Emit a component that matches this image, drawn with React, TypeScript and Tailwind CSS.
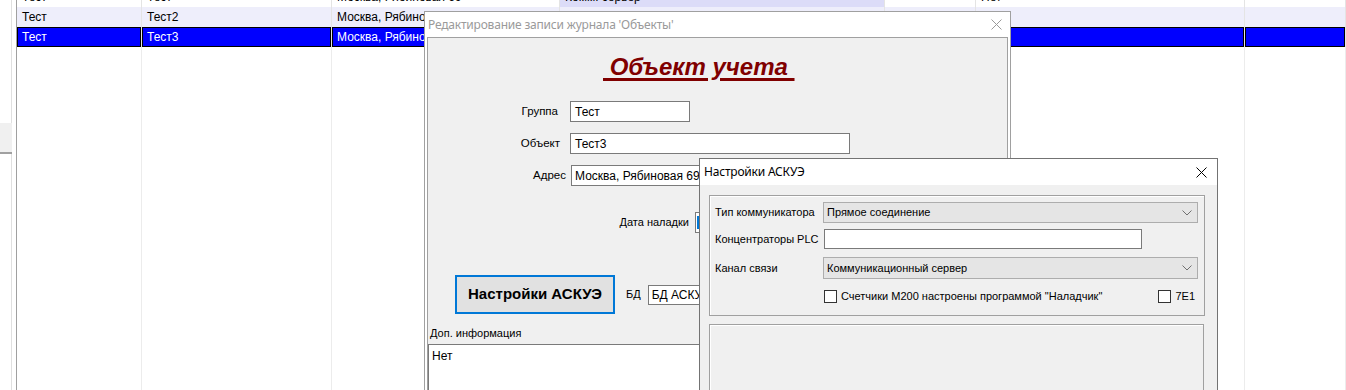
import React from "react";

const cellW = ["w-[125px]", "w-[190px]", "w-[228px]", "w-[325px]", "w-[91px]", "w-[269px]", "w-[101px]"];

function Chevron() {
  return (
    <svg width="10" height="6" viewBox="0 0 10 6">
      <polyline points="0.5,0.5 5,5 9.5,0.5" fill="none" stroke="#707070" strokeWidth="1" />
    </svg>
  );
}

function CloseX({ color }: { color: string }) {
  return (
    <svg width="11" height="11" viewBox="0 0 11 11">
      <path d="M0.5,0.5 L10.5,10.5 M10.5,0.5 L0.5,10.5" stroke={color} strokeWidth="1" />
    </svg>
  );
}

function Row({ cells, kind, extra }: { cells: string[]; kind: "plain" | "alt" | "sel"; extra?: string }) {
  return (
    <div className={`flex h-[20px] ${extra ?? ""}`}>
      {cellW.map((w, i) => {
        const txt = cells[i] ?? "";
        if (kind === "sel") {
          return (
            <div key={i} className={`${w} shrink-0 h-full border-r border-[#e4e4e4]`}>
              <div className="h-full border border-black bg-[#0000ff] text-white pl-[4px] flex items-center whitespace-nowrap overflow-hidden">
                {txt}
              </div>
            </div>
          );
        }
        const bg =
          kind === "alt" ? "bg-[#eeeefb]" : i === 3 ? "bg-[#dcdcf8]" : "bg-white";
        return (
          <div
            key={i}
            className={`${w} shrink-0 h-full ${bg} border-r border-[#e4e4e4] pl-[5px] flex items-center whitespace-nowrap overflow-hidden text-black`}
          >
            {txt}
          </div>
        );
      })}
    </div>
  );
}

export default function App() {
  return (
    <div className="relative w-[1346px] h-[390px] overflow-hidden bg-white font-['Liberation_Sans',Arial,sans-serif] text-[12px] text-black">
      {/* background: left strip + grid */}
      <div className="flex h-full">
        <div className="w-[16px] shrink-0 h-full flex flex-col">
          <div className="h-[123px] w-[12px] border-r border-[#e0e0e0] bg-white" />
          <div className="h-[31px] w-[12px] bg-[#f0f0f0] border-b-2 border-[#a0a0a0]" />
          <div className="flex-1 w-[12px] border-r border-[#e0e0e0] bg-white" />
        </div>
        <div className="w-[1px] shrink-0 bg-[#a0a0a0] h-full" />
        <div className="flex-1 h-full flex flex-col overflow-hidden">
          <Row cells={["Тест", "Тест", "Москва, Рябиновая 69", "Комм. сервер", "", "Нет", ""]} kind="plain" extra="-mt-[13px]" />
          <Row cells={["Тест", "Тест2", "Москва, Рябиновая 69", "Комм. сервер", "", "Нет", ""]} kind="alt" />
          <Row cells={["Тест", "Тест3", "Москва, Рябиновая 69", "Комм. сервер", "", "Нет", ""]} kind="sel" />
          <div className="flex flex-1">
            {cellW.map((w, i) => (
              <div key={i} className={`${w} shrink-0 h-full border-r border-[#ececec]`} />
            ))}
          </div>
        </div>
      </div>

      {/* Dialog 1 */}
      <div className="absolute left-[424px] top-[11px] w-[587px] h-[400px] border border-[#a0a0a0] bg-white flex flex-col">
        <div className="h-[25px] shrink-0 flex items-center justify-between pl-[3px] pr-[8px] font-['Noto_Sans','Open_Sans',sans-serif] text-[12px] text-[#9a9a9a]">
          <span className="tracking-[-0.2px]">Редактирование записи журнала 'Объекты'</span>
          <CloseX color="#9a9a9a" />
        </div>
        <div className="flex-1 mx-[2px] border border-[#a0a0a0] bg-[#f0f0f0] flex flex-col">
          <div className="mt-[15px] ml-[175px] h-[28px] flex items-center">
            <span className="whitespace-pre font-bold italic text-[24px] leading-[28px] text-[#800000] underline decoration-[3px] underline-offset-[3px]">
              {" Объект учета "}
            </span>
          </div>
          <div className="mt-[20px] flex items-center h-[21px]">
            <span className="w-[130px] text-right text-[11.5px]">Группа</span>
            <div className="ml-[12px] w-[120px] h-[21px] bg-white border border-[#7a7a7a] pl-[4px] flex items-center">Тест</div>
          </div>
          <div className="mt-[11px] flex items-center h-[21px]">
            <span className="w-[132px] text-right text-[11.5px]">Объект</span>
            <div className="ml-[10px] w-[280px] h-[21px] bg-white border border-[#7a7a7a] pl-[4px] flex items-center">Тест3</div>
          </div>
          <div className="mt-[11px] flex items-center h-[21px]">
            <span className="w-[138px] text-right text-[11.5px]">Адрес</span>
            <div className="ml-[5px] w-[280px] h-[21px] bg-white border border-[#7a7a7a] pl-[3px] flex items-center">Москва, Рябиновая 69</div>
          </div>
          <div className="mt-[26px] flex items-center h-[21px]">
            <span className="w-[261px] text-right text-[11px]">Дата наладки</span>
            <div className="ml-[6px] w-[120px] h-[21px] bg-white border border-[#7a7a7a] flex items-center">
              <div className="ml-[1px] w-[3px] h-[13px] bg-[#0078d7]" />
            </div>
          </div>
          <div className="mt-[42px] flex items-center h-[39px]">
            <button className="ml-[27px] w-[160px] h-[39px] bg-[#e1e1e1] border-2 border-[#0078d7] font-bold text-[15px] text-black">
              Настройки АСКУЭ
            </button>
            <span className="ml-[11px] text-[11px]">БД</span>
            <div className="ml-[7px] w-[200px] h-[20px] bg-white border border-[#7a7a7a] pl-[3px] flex items-center">БД АСКУЭ</div>
          </div>
          <div className="mt-[12px] ml-[2px] leading-[14px] text-[11px]">Доп. информация</div>
          <div className="mt-[4px] w-[580px] h-[60px] bg-white border border-[#7a7a7a] pl-[3px] pt-[2px]">Нет</div>
        </div>
      </div>

      {/* Dialog 2 */}
      <div className="absolute left-[699px] top-[158px] w-[519px] h-[250px] border border-[#737373] bg-white flex flex-col">
        <div className="h-[26px] shrink-0 flex items-center justify-between pl-[4px] pr-[10px] font-['Noto_Sans','Open_Sans',sans-serif] text-[12px] text-black">
          <span className="tracking-[-0.2px]">Настройки АСКУЭ</span>
          <CloseX color="#000000" />
        </div>
        <div className="flex-1 bg-[#f0f0f0] flex flex-col pl-[9px]">
          <div className="mt-[10px] w-[496px] h-[121px] border border-[#a0a0a0] shadow-[inset_1px_1px_0_#ffffff] flex flex-col pl-[5px] text-[11px]">
            <div className="mt-[6px] flex items-center h-[21px]">
              <span className="w-[108px]">Тип коммуникатора</span>
              <div className="w-[375px] h-[21px] bg-[#e5e5e5] border border-[#adadad] pl-[3px] pr-[5px] flex items-center justify-between">
                <span>Прямое соединение</span>
                <Chevron />
              </div>
            </div>
            <div className="mt-[6px] flex items-center h-[20px]">
              <span className="w-[109px]">Концентраторы PLC</span>
              <div className="w-[318px] h-[20px] bg-white border border-[#7a7a7a]" />
            </div>
            <div className="mt-[8px] flex items-center h-[22px]">
              <span className="w-[108px]">Канал связи</span>
              <div className="w-[375px] h-[22px] bg-[#e5e5e5] border border-[#adadad] pl-[3px] pr-[5px] flex items-center justify-between">
                <span>Коммуникационный сервер</span>
                <Chevron />
              </div>
            </div>
            <div className="mt-[11px] flex items-center h-[13px]">
              <div className="ml-[109px] w-[13px] h-[13px] bg-white border border-[#333333]" />
              <span className="ml-[4px]">Счетчики М200 настроены программой "Наладчик"</span>
              <div className="ml-auto mr-[9px] flex items-center">
                <div className="w-[13px] h-[13px] bg-white border border-[#333333]" />
                <span className="ml-[4px]">7E1</span>
              </div>
            </div>
          </div>
          <div className="mt-[8px] w-[495px] h-[100px] border border-[#a0a0a0] shadow-[inset_1px_1px_0_#ffffff]" />
        </div>
      </div>
    </div>
  );
}
